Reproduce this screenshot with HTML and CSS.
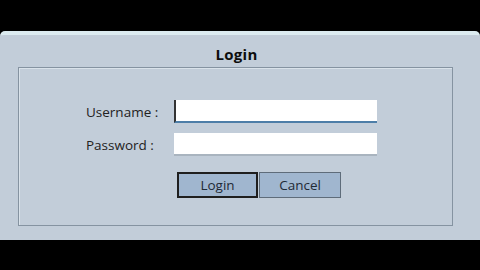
FILE: index.html
```html
<!DOCTYPE html>
<html lang="en">
<head>
<meta charset="UTF-8">
<title>Login</title>
<link rel="stylesheet" href="styles.css">
</head>
<body>
<div class="window">
  <h1 class="title">Login</h1>
  <div class="group">
    <form class="login-form">
      <label for="username">Username :</label>
      <input type="text" id="username" class="focused">
      <label for="password">Password :</label>
      <input type="password" id="password">
    </form>
    <div class="buttons">
      <button class="btn btn-default">Login</button>
      <button class="btn">Cancel</button>
    </div>
  </div>
</div>
</body>
</html>
```

FILE: styles.css
```css
body {
  margin: 0;
  background-color: #000;
  font-family: 'Open Sans', 'Noto Sans', sans-serif;
  color: #1a1a1a;
}

.window {
  margin-top: 31px;
  height: 205px;
  background-color: #c2cdd9;
  border-top: 4px solid #dcebf0;
  border-radius: 5px 5px 0 0;
  overflow: hidden;
}

.title {
  margin: 0;
  padding-top: 9px;
  height: 23px;
  font-size: 15px;
  font-weight: bold;
  text-align: center;
  color: #0d0d0d;
  letter-spacing: 0.3px;
  line-height: 20px;
  padding-right: 7px;
}

.group {
  margin-left: 18px;
  width: 433px;
  height: 157px;
  border: 1px solid #8593a1;
  box-shadow: inset 1px 1px 0 #d9e2ea;
}

.login-form {
  display: grid;
  grid-template-columns: 140px 203px;
  column-gap: 15px;
  row-gap: 10px;
  align-items: center;
  padding-top: 32px;
}

.login-form label {
  font-size: 13.5px;
  color: #222;
  padding-left: 67px;
}

.login-form input {
  height: 23px;
  margin: 0;
  padding: 0 2px;
  border: none;
  border-bottom: 2px solid #a9b4bf;
  background-color: #fff;
  box-sizing: border-box;
}

.login-form input.focused {
  border-left: 2px solid #333;
  border-bottom: 2px solid #4d7ea8;
}

.buttons {
  display: flex;
  gap: 1px;
  margin-top: 16px;
  margin-left: 158px;
}

.btn {
  width: 82px;
  height: 26px;
  font-family: 'Open Sans', 'Noto Sans', sans-serif;
  font-size: 13.5px;
  color: #1f2a36;
  background-color: #a0b6cf;
  border: 1px solid #5e6c7a;
  padding: 0;
}

.btn-default {
  width: 81px;
  border: 2px solid #1f1f1f;
}
```
